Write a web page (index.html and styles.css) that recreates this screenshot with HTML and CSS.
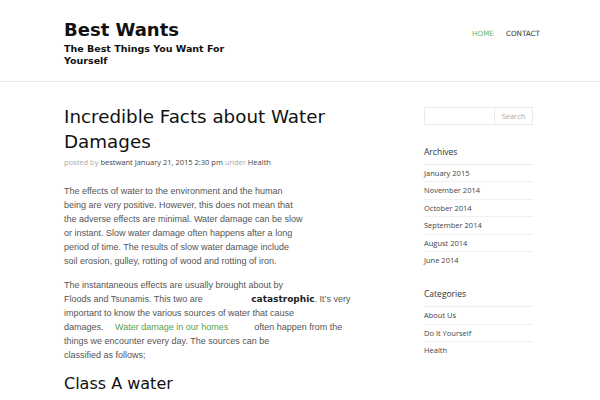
FILE: index.html
```html
<!DOCTYPE html>
<html>
<head>
<meta charset="utf-8">
<link rel="stylesheet" href="styles.css">
</head>
<body>
<header class="site-header">
  <div class="branding">
    <h1 class="site-title">Best Wants</h1>
    <p class="site-desc">The Best Things You Want For<br>Yourself</p>
  </div>
  <nav class="nav">
    <a class="nav-item active">HOME</a>
    <a class="nav-item">CONTACT</a>
  </nav>
</header>
<div class="wrap">
  <main class="content">
    <h2 class="post-title">Incredible Facts about Water<br>Damages</h2>
    <div class="meta"><span class="light">posted by</span> bestwant January 21, 2015 2:30 pm <span class="light">under</span> Health</div>
    <p class="para">The effects of water to the environment and the human<br>being are very positive. However, this does not mean that<br>the adverse effects are minimal. Water damage can be slow<br>or instant. Slow water damage often happens after a long<br>period of time. The results of slow water damage include<br>soil erosion, gulley, rotting of wood and rotting of iron.</p>
    <p class="para">The instantaneous effects are usually brought about by<br>Floods and Tsunamis. This two are <span class="gap1"></span><b class="strong">catastrophic</b>. It’s very<br>important to know the various sources of water that cause<br>damages. <span class="gap2"></span><a class="link">Water damage in our homes</a><span class="gap3"></span>often happen from the<br>things we encounter every day. The sources can be<br>classified as follows;</p>
    <h3 class="sub">Class A water</h3>
  </main>
  <aside class="sidebar">
    <div class="search">
      <div class="search-input"></div>
      <div class="search-btn">Search</div>
    </div>
    <h4 class="widget-title">Archives</h4>
    <ul class="list">
      <li>January 2015</li>
      <li>November 2014</li>
      <li>October 2014</li>
      <li>September 2014</li>
      <li>August 2014</li>
      <li>June 2014</li>
    </ul>
    <h4 class="widget-title cat">Categories</h4>
    <ul class="list">
      <li>About Us</li>
      <li>Do It Yourself</li>
      <li>Health</li>
    </ul>
  </aside>
</div>
</body>
</html>
```
FILE: styles.css
```css
html, body { margin: 0; padding: 0; background: #fff; }
body { font-family: "DejaVu Sans", sans-serif; color: #222; }
.site-header {
  display: flex; justify-content: space-between; align-items: flex-start;
  padding: 17px 60px 0 64px; height: 64px;
  border-bottom: 1px solid #ececec;
}
.site-title { margin: 0; font-size: 18px; font-weight: bold; color: #111; line-height: 26px; }
.site-desc { margin: 0; font-size: 9.5px; font-weight: bold; color: #111; line-height: 12px; }
.nav { display: flex; gap: 12px; padding-top: 12px; }
.nav-item { font-size: 7.2px; color: #333; }
.nav-item.active { color: #6cb861; }
.wrap { display: flex; padding: 0 0 0 64px; gap: 80px; }
.content { width: 280px; }
.post-title { margin: 22px 0 0; font-weight: normal; font-size: 18.3px; line-height: 25px; color: #111; }
.meta { font-family: "Open Sans", sans-serif; font-size: 7.5px; color: #444; margin-top: 3px; }
.meta .light { color: #aaa; }
.para { font-family: "Liberation Sans", sans-serif; font-size: 9px; line-height: 14px; color: #555; margin: 17px 0 0; white-space: nowrap; }
.para + .para { margin-top: 10px; }
.gap1 { display: inline-block; width: 46px; }
.gap2 { display: inline-block; width: 9px; }
.gap3 { display: inline-block; width: 26px; }
.strong { font-family: "DejaVu Sans", sans-serif; font-weight: bold; color: #222; }
.link { color: #5a9f4e; }
.sub { margin: 12px 0 0; font-weight: normal; font-size: 16px; color: #111; }
.sidebar { width: 109px; padding-top: 25px; font-family: "Open Sans", sans-serif; }
.search { display: flex; height: 16px; border: 1px solid #eaeaea; }
.search-input { width: 69px; border-right: 1px solid #eaeaea; }
.search-btn { flex: 1; font-size: 7.5px; color: #aaa; text-align: center; line-height: 16px; }
.widget-title { margin: 21px 0 0; font-weight: normal; font-size: 8.5px; color: #333; padding-bottom: 7px; border-bottom: 1px solid #eee; }
.widget-title.cat { margin-top: 20px; }
.list { list-style: none; margin: 0; padding: 0; }
.list li { font-size: 7.5px; color: #444; line-height: 16.4px; border-bottom: 1px solid #f0f0f0; }
.list li:last-child { border-bottom: none; }
```
